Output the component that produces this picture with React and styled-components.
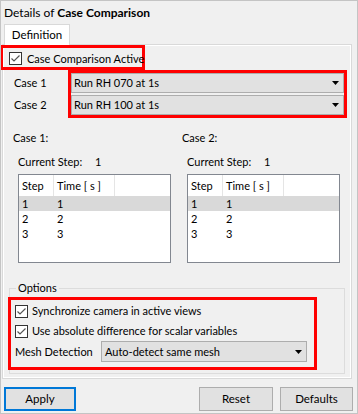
import React from 'react';
import styled, { createGlobalStyle } from 'styled-components';

const Global = createGlobalStyle`
  html, body { margin: 0; padding: 0; background: #f0f0f0; }
  body { font-family: Lato, "Noto Sans", sans-serif; font-size: 11px; line-height: 16px; color: #000; }
  * { box-sizing: border-box; }
`;

const Window = styled.div`
  width: 358px;
  height: 414px;
  border: 1px solid #c4c4c4;
  background: #f0f0f0;
  display: flex;
  flex-direction: column;
  overflow: hidden;
  white-space: nowrap;
`;

const Title = styled.div`
  height: 23px;
  padding-left: 3px;
  display: flex;
  align-items: center;
  font-size: 12px;
  b { font-weight: 700; }
`;

const TabBar = styled.div`
  height: 20px;
  padding-left: 3px;
  display: flex;
  align-items: flex-end;
  position: relative;
  z-index: 1;
`;

const Tab = styled.div`
  width: 66px;
  height: 21px;
  margin-bottom: -1px;
  border: 1px solid #d9d9d9;
  border-bottom: none;
  background: #fff;
  display: flex;
  align-items: center;
  justify-content: center;
  font-size: 11.5px;
`;

const Pane = styled.div`
  margin-left: 1px;
  width: 350px;
  height: 335px;
  border: 1px solid #d9d9d9;
  box-shadow: inset 1px 1px 0 #fff, inset -1px -1px 0 #fff;
  display: flex;
  flex-direction: column;
`;

const Highlight = styled.div`
  border: 3px solid #ff0000;
  display: flex;
`;

const ActiveBox = styled(Highlight)`
  margin-left: -3px;
  width: 145px;
  height: 25px;
  align-items: center;
  padding: 2px 0 0 6px;
  gap: 5px;
`;

const CaseRow = styled.div`
  display: flex;
`;

const CaseLabels = styled.div`
  width: 65px;
  padding: 3px 0 0 11px;
  display: flex;
  flex-direction: column;
  gap: 2px;
`;

const CaseLabel = styled.div`
  height: 20px;
  display: flex;
  align-items: center;
`;

const CaseBox = styled(Highlight)`
  width: 279px;
  flex-direction: column;
  gap: 2px;
`;

const Combo = styled.div`
  height: ${p => p.$h || 20}px;
  width: ${p => (p.$w ? `${p.$w}px` : 'auto')};
  border: 1px solid #adadad;
  background: #e1e1e1;
  display: flex;
  align-items: center;
  justify-content: space-between;
  padding: 0 4px 0 ${p => p.$pl || 2}px;
`;

const Columns = styled.div`
  margin-top: 12px;
  padding-left: 10px;
  display: grid;
  grid-template-columns: 169px 169px;
`;

const Column = styled.div`
  display: flex;
  flex-direction: column;
`;

const Line = styled.div`
  height: 16px;
`;

const StepRow = styled.div`
  margin-top: 8px;
  padding-left: 5px;
  display: flex;
`;

const StepLabel = styled.span`
  flex: none;
  width: 77px;
`;

const Table = styled.div`
  margin: 4px 0 0 5px;
  width: 153px;
  height: 89px;
  border: 1px solid #828790;
  background: #fff;
  display: flex;
  flex-direction: column;
`;

const Row = styled.div`
  display: grid;
  grid-template-columns: 35px 61px 1fr;
  height: ${p => (p.$header ? 21 : 15)}px;
  line-height: 15px;
  background: ${p => (p.$selected ? '#d9d9d9' : 'transparent')};
`;

const Cell = styled.div`
  height: 100%;
  display: flex;
  align-items: center;
  padding-left: 3px;
  border-right: ${p => (p.$sep ? '1px solid #e5e5e5' : 'none')};
`;

const Options = styled.fieldset`
  margin: 17px 0 0 6px;
  width: 336px;
  padding: 0 0 3px 0;
  border: 1px solid #dcdcdc;
  min-inline-size: 0;
`;

const Legend = styled.legend`
  margin-left: 6px;
  padding: 0 2px;
  line-height: 16px;
`;

const OptionsBox = styled(Highlight)`
  margin: 1px 0 0 -2px;
  width: 309px;
  height: 73px;
  flex-direction: column;
  padding: 1px 0 0 4px;
`;

const CheckRow = styled.div`
  height: 20px;
  display: flex;
  align-items: center;
  gap: 4px;
`;

const MeshRow = styled.div`
  height: 21px;
  display: flex;
  align-items: center;
`;

const MeshLabel = styled.span`
  flex: none;
  width: 86px;
`;

const Buttons = styled.div`
  margin-top: 8px;
  padding: 0 4px 0 3px;
  display: flex;
  align-items: center;
`;

const Spacer = styled.div`
  flex: 1;
`;

const Button = styled.div`
  width: ${p => p.$w}px;
  height: 24px;
  margin-left: ${p => p.$ml || 0}px;
  border: ${p => (p.$default ? '2px solid #0078d7' : '1px solid #adadad')};
  background: #e1e1e1;
  display: flex;
  align-items: center;
  justify-content: center;
  font-size: 11.5px;
`;

const BoxIcon = styled.svg`
  flex: none;
  display: block;
`;

const Check = () => (
  <BoxIcon width="13" height="13" viewBox="0 0 13 13">
    <rect x="0.5" y="0.5" width="12" height="12" fill="#fff" stroke="#333" />
    <polyline points="2.5,6.5 5,9 10.5,3.5" fill="none" stroke="#555" strokeWidth="1.2" />
  </BoxIcon>
);

const Arrow = () => (
  <BoxIcon width="7" height="4" viewBox="0 0 7 4">
    <polygon points="0,0 7,0 3.5,4" fill="#000" />
  </BoxIcon>
);

const StepTable = () => (
  <Table>
    <Row $header>
      <Cell $sep>Step</Cell>
      <Cell $sep>Time [ s ]</Cell>
      <Cell />
    </Row>
    {[1, 2, 3].map(n => (
      <Row key={n} $selected={n === 1}>
        <Cell>{n}</Cell>
        <Cell>{n}</Cell>
        <Cell />
      </Row>
    ))}
  </Table>
);

export default function App() {
  return (
    <>
      <Global />
      <Window>
        <Title>
          Details of&nbsp;<b>Case Comparison</b>
        </Title>
        <TabBar>
          <Tab>Definition</Tab>
        </TabBar>
        <Pane>
          <ActiveBox>
            <Check />
            <span>Case Comparison Active</span>
          </ActiveBox>
          <CaseRow>
            <CaseLabels>
              <CaseLabel>Case 1</CaseLabel>
              <CaseLabel>Case 2</CaseLabel>
            </CaseLabels>
            <CaseBox>
              <Combo>
                <span>Run RH 070 at 1s</span>
                <Arrow />
              </Combo>
              <Combo>
                <span>Run RH 100 at 1s</span>
                <Arrow />
              </Combo>
            </CaseBox>
          </CaseRow>
          <Columns>
            {[1, 2].map(c => (
              <Column key={c}>
                <Line>Case {c}:</Line>
                <StepRow>
                  <StepLabel>Current Step:</StepLabel>
                  <span>1</span>
                </StepRow>
                <StepTable />
              </Column>
            ))}
          </Columns>
          <Options>
            <Legend>Options</Legend>
            <OptionsBox>
              <CheckRow>
                <Check />
                <span>Synchronize camera in active views</span>
              </CheckRow>
              <CheckRow>
                <Check />
                <span>Use absolute difference for scalar variables</span>
              </CheckRow>
              <MeshRow>
                <MeshLabel>Mesh Detection</MeshLabel>
                <Combo $h={21} $w={206} $pl={3}>
                  <span>Auto-detect same mesh</span>
                  <Arrow />
                </Combo>
              </MeshRow>
            </OptionsBox>
          </Options>
        </Pane>
        <Buttons>
          <Button $w={72} $default>Apply</Button>
          <Spacer />
          <Button $w={74}>Reset</Button>
          <Button $w={73} $ml={7}>Defaults</Button>
        </Buttons>
      </Window>
    </>
  );
}
